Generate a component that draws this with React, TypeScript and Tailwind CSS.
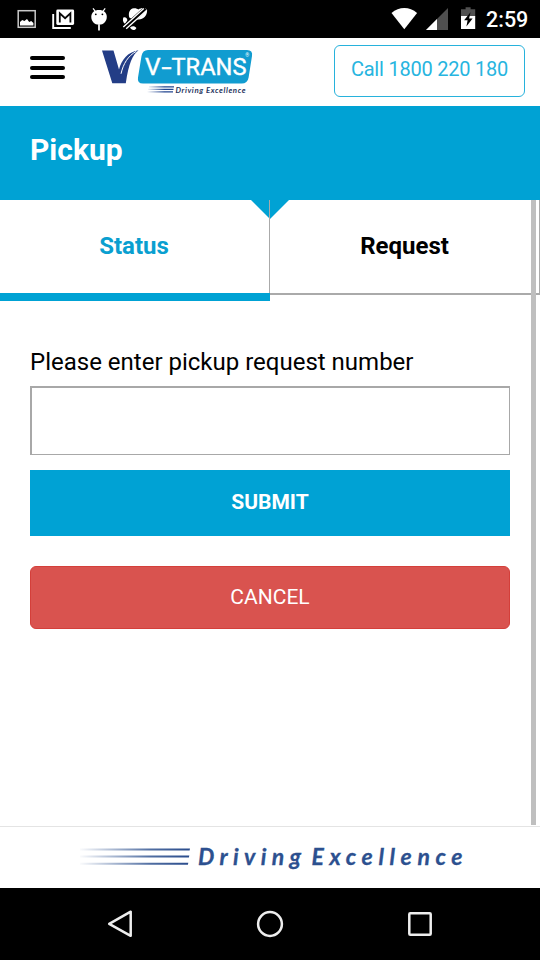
import React from "react";

function StatusBar() {
  return (
    <div className="flex h-[38px] shrink-0 items-center justify-between bg-black pl-[17px] pr-3">
      <svg className="h-[38px] w-[131px]" viewBox="17 0 131 38" fill="none" aria-hidden="true">
        <rect x="18.2" y="10.7" width="17" height="16.6" stroke="#c9c9c9" strokeWidth="1.5" />
        <path d="M20 25.4v-3.5l2.2-1.8 2.2 1 2.6-2 2.2 2.8 2-1 2.2 2v2.5z" fill="#fff" />
        <path d="M53.2 14v14h17.6" stroke="#fff" strokeWidth="1.9" />
        <rect x="56.3" y="9.6" width="17.8" height="15.4" rx="1.4" fill="#fff" />
        <path d="M59.8 22.6v-9.2l5.3 4.8 5.3-4.8v9.2" stroke="#080808" strokeWidth="1.8" />
        <path d="M93 8.4l2.3 3M105.2 8.4l-2.3 3" stroke="#fff" strokeWidth="1.2" />
        <path d="M91.3 16.7c0-4.4 3.2-6.8 7.7-6.8s7.8 2.4 7.8 6.8c0 4.700-3.300 8-7.800 8s-7.700-3.300-7.700-8z" fill="#fff" />
        <path d="M99 24v6.6" stroke="#ddd" strokeWidth="2" />
        <circle cx="95.8" cy="14.3" r=".9" fill="#000" />
        <circle cx="102.4" cy="14.3" r=".9" fill="#000" />
        <path d="M129.300 17.500c-1.200-4.500.2-8.800 4.500-9.300 2-.2 3.600.5 4.500 1.300 3.500-2.300 8.800-2 8.800 1.300 0 5.600-4.800 9.500-9.600 8.600l-4 .5z" fill="#fff" />
        <path d="M123.600 17.300c2.200-.4 4 .9 3.700 3.300l-2.400 3.100c-2-1.200-2.600-4.600-1.300-6.400zM130 27.600c2-1.900 4.700-1.900 6.400.3-.8 2.600-4.800 2.900-6.400-.3z" fill="#fff" />
        <path d="M124.500 27.600L145.500 8.600" stroke="#000" strokeWidth="4.600" />
        <path d="M123.300 27L143.800 8.400M126.200 28.700L146.800 10.200" stroke="#fff" strokeWidth="1.400" />
      </svg>
      <div className="flex items-center">
        <svg className="h-[38px] w-[86px]" viewBox="391 0 86 38" fill="none" aria-hidden="true">
          <path d="M404.300 29.300L391.500 12.900c7.600-6.400 18-6.400 25.600 0z" fill="#fff" />
          <path d="M448 8v22h-22z" fill="#505050" />
          <path d="M437 19v11h-11z" fill="#fff" />
          <path d="M461 16.500V9.200h4.600V7.300h5v1.900h4.600v7.300z" fill="#505050" />
          <path d="M461 16h14.200v13H461z" fill="#fff" />
          <path d="M470.500 12.300l-6.400 8h3.500l-1.200 6.300 6.200-8.100h-3.500z" fill="#000" />
        </svg>
        <time className="ml-[9px] w-[42px] whitespace-nowrap pt-[2px] text-[21.500px] leading-[36px] font-medium text-white">2:59</time>
      </div>
    </div>
  );
}

function Logo() {
  return (
    <svg className="h-[50px] w-[154px]" viewBox="100 46 154 50" role="img" aria-label="V-Trans">
      <defs>
        <linearGradient id="logoLines" x1="147" x2="174" y1="0" y2="0" gradientUnits="userSpaceOnUse">
          <stop stopColor="#22458f" stopOpacity="0" />
          <stop offset=".65" stopColor="#22458f" />
        </linearGradient>
      </defs>
      <path d="M102 50.500h11.500l5.500 19C121.500 60 127.500 52 138.500 50.300c-6 4.500-9.700 13-12.700 33h-13.500z" fill="#233d86" />
      <path d="M136.300 51.300c-8.500 4.800-13 12.500-15.300 22.500" stroke="#fff" strokeWidth="1" fill="none" />
      <path d="M148 50h99q6 0 5 6l-3.400 21.500q-1 6-7 6H143q-6 0-5-6l3.500-21.500q1-6 6.500-6z" fill="#119cd0" />
      <text y="74.700" className="fill-white font-['Roboto',sans-serif] text-[24.500px] font-normal [stroke-width:.4px] stroke-white">
        <tspan x="145">V</tspan>
        <tspan x="161.500" textLength="10" lengthAdjust="spacingAndGlyphs">-</tspan>
        <tspan x="171.500" textLength="75" lengthAdjust="spacingAndGlyphs">TRANS</tspan>
      </text>
      <text x="245.200" y="57" className="fill-white font-['Roboto',sans-serif] text-[5px]">®</text>
      <path d="M149 86.200h25v1.200h-25zM148 88.700h25.500v1.200H148zM147 91.200h26v1.200h-26z" fill="url(#logoLines)" />
      <text x="175.500" y="92.600" textLength="70" className="fill-[#29375f] font-['Lato',sans-serif] text-[7.800px] font-bold italic">Driving Excellence</text>
    </svg>
  );
}

function Header() {
  return (
    <header className="flex h-[68px] shrink-0 items-start bg-white pl-[30px] pr-[15px] pt-[7px]">
      <button aria-label="Menu" className="mt-[11px] flex w-[35px] flex-col gap-[5.500px]">
        <span className="h-[4px] w-full rounded-full bg-black" />
        <span className="h-[4px] w-full rounded-full bg-black" />
        <span className="h-[4px] w-full rounded-full bg-black" />
      </button>
      <div className="ml-[35px] mt-px">
        <Logo />
      </div>
      <button className="ml-auto h-[52px] w-[191px] whitespace-nowrap rounded-[6px] border-[1.500px] border-[#27b2dc] pb-[5px] text-[20px] tracking-[-0.220px] text-[#27b5df]">
        Call 1800 220 180
      </button>
    </header>
  );
}

function Tabs() {
  return (
    <div className="relative flex h-[101px] shrink-0 items-start">
      <button className="h-[101px] w-[270px] border-b-8 border-[#00a2d4] pb-px pr-[2px] text-[24px] font-bold text-[#0a9fd0]">Status</button>
      <button className="h-[95px] w-[270px] border-b-2 border-r border-[#aaa] pb-[2px] text-[24px] font-bold text-black">Request</button>
      <svg className="absolute left-[250px] top-0 h-[19px] w-[40px]" viewBox="0 0 40 19" aria-hidden="true">
        <path d="M1 0h38L20 19z" fill="#00a2d4" />
      </svg>
      <span className="absolute left-[269px] top-0 h-[93px] w-px bg-[#aaa]" />
    </div>
  );
}

function Footer() {
  return (
    <footer className="h-[62px] shrink-0 bg-white">
      <svg className="h-[62px] w-full" viewBox="0 826 540 62">
        <defs>
          <linearGradient id="footerLines" x1="78" x2="190" y1="0" y2="0" gradientUnits="userSpaceOnUse">
            <stop stopColor="#315491" stopOpacity="0" />
            <stop offset=".65" stopColor="#315491" stopOpacity=".85" />
            <stop offset="1" stopColor="#294b8c" />
          </linearGradient>
        </defs>
        <path d="M0 826h540" stroke="#e4e4e4" strokeWidth="2" />
        <path d="M80 848.400h110l-.4 2H80zM80 855.600h109.300l-.4 2H80zM80 862.800h108.300l-.4 2H80z" fill="url(#footerLines)" />
        <text x="198" y="865" textLength="103" className="fill-[#2c508f] font-['Lato',sans-serif] text-[23px] font-bold italic [stroke-width:.3px] stroke-[#2c508f]">Driving</text>
        <text x="311.500" y="865" textLength="151" className="fill-[#2c508f] font-['Lato',sans-serif] text-[23px] font-bold italic [stroke-width:.3px] stroke-[#2c508f]">Excellence</text>
      </svg>
    </footer>
  );
}

function NavigationBar() {
  return (
    <nav className="flex h-[72px] shrink-0 items-center justify-between bg-black px-[105px]">
      <button aria-label="Back">
        <svg className="size-[30px]" viewBox="0 0 30 30" fill="none" stroke="#eee" strokeWidth="2.500" strokeLinejoin="round"><path d="M25.700 2.700v24.100L4.200 14.900z" /></svg>
      </button>
      <button aria-label="Home">
        <svg className="size-[30px]" viewBox="0 0 30 30" fill="none" stroke="#eee" strokeWidth="2.500"><circle cx="15" cy="15" r="11.900" /></svg>
      </button>
      <button aria-label="Recent apps">
        <svg className="size-[30px]" viewBox="0 0 30 30" fill="none" stroke="#eee" strokeWidth="2.500"><rect x="4.300" y="4.300" width="21.400" height="21.400" rx="1" /></svg>
      </button>
    </nav>
  );
}

export default function App() {
  return (
    <div className="flex h-[960px] w-[540px] flex-col overflow-hidden bg-white font-['Roboto',sans-serif] text-black">
      <StatusBar />
      <Header />
      <div className="flex h-[94px] shrink-0 items-center bg-[#00a2d4] pb-[6px] pl-[30px]">
        <h1 className="text-[30px] font-bold leading-9 text-white">Pickup</h1>
      </div>
      <main className="relative flex h-[626px] shrink-0 flex-col">
        <Tabs />
        <form className="flex flex-col px-[30px] pt-[43px]" onSubmit={(event) => event.preventDefault()}>
          <label htmlFor="pickup-number" className="h-[42px] whitespace-nowrap text-[24px] leading-9">Please enter pickup request number</label>
          <input id="pickup-number" className="h-[69px] w-full border border-l-2 border-t-2 border-[#a8a8a8] bg-white px-3 text-xl outline-none" />
          <button className="mt-[15px] h-[66px] bg-[#00a2d4] text-[21px] font-bold text-white">SUBMIT</button>
          <button type="button" className="mt-[30px] h-[63px] rounded-[6px] border border-[#d43f3a] bg-[#d9534f] text-[21px] text-white">CANCEL</button>
        </form>
        <span className="absolute right-[4px] top-0 h-[625px] w-[5px] bg-[#bfbfbf]" />
      </main>
      <Footer />
      <NavigationBar />
    </div>
  );
}
